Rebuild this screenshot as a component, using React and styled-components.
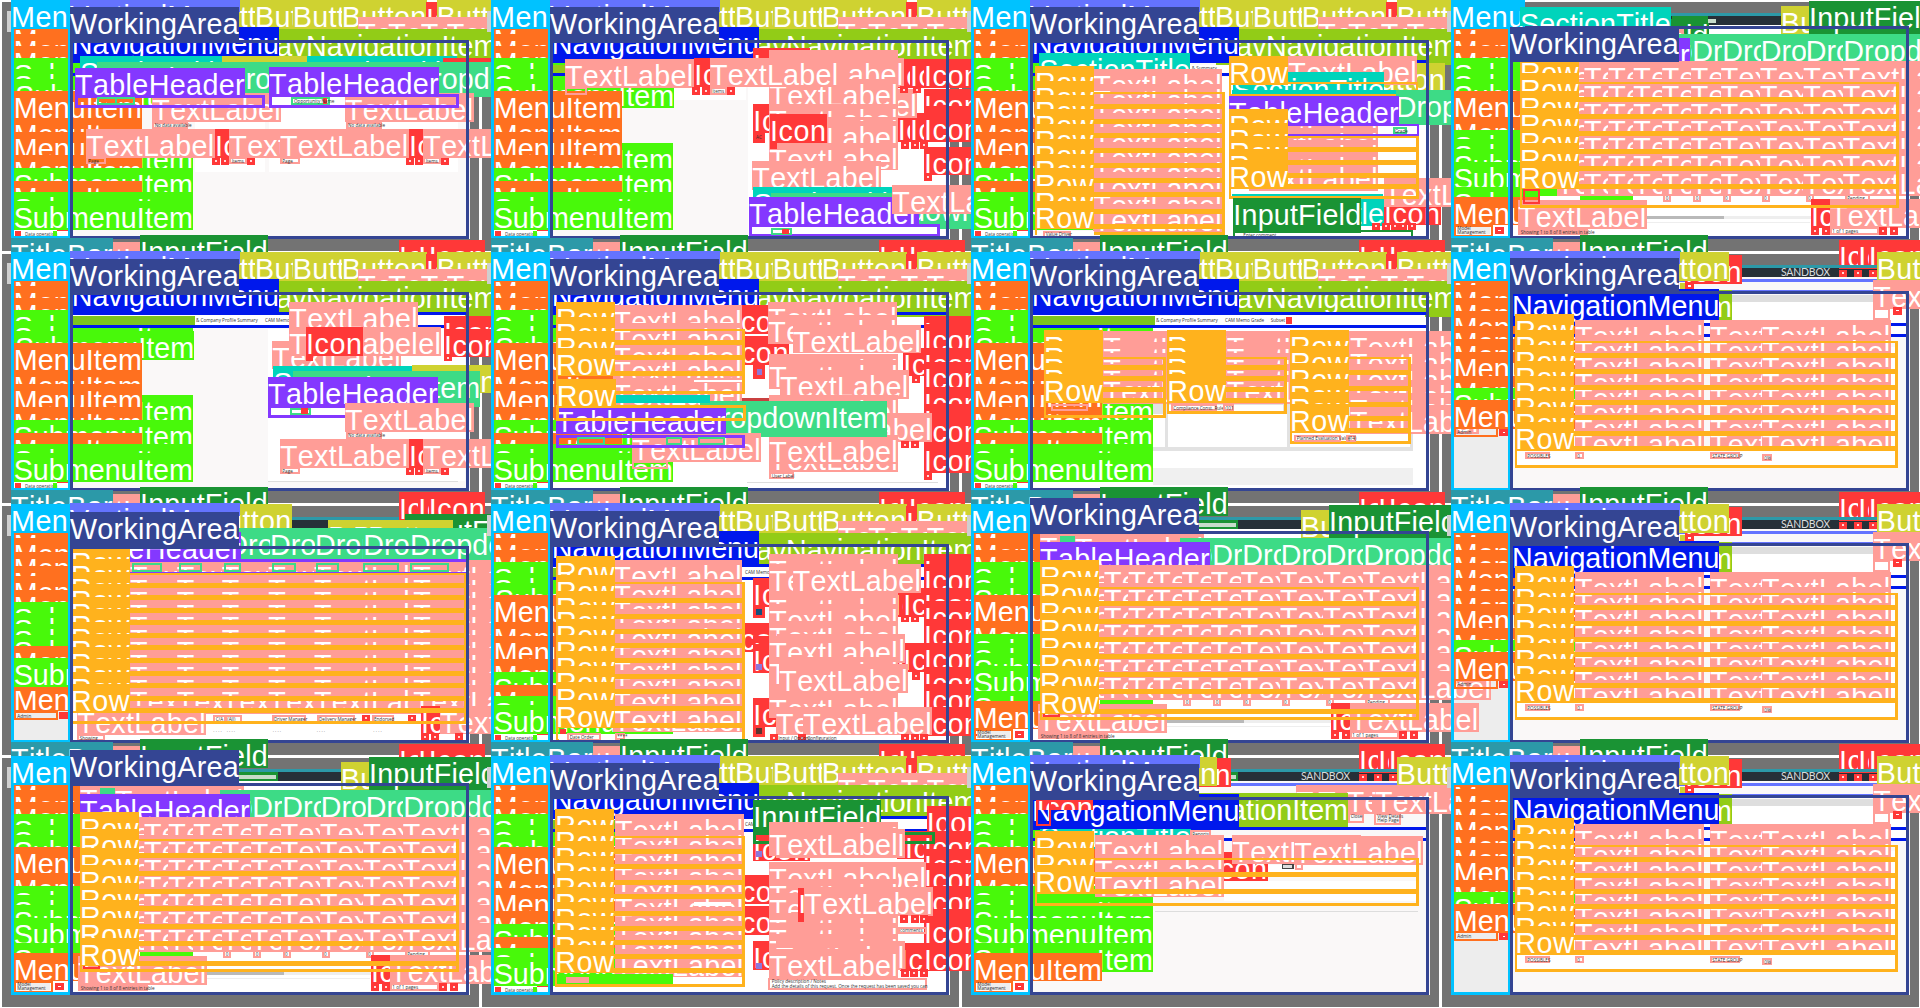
import React from "react";
import styled, { createGlobalStyle } from "styled-components";

const Global = createGlobalStyle`
  body { margin: 0; background: #fff; font-family: "Liberation Sans", Arial, sans-serif; }
`;

/* Class palette: [name, colour, label width, label has a descender] */
const KINDS = {
  I: ["Icon", "#ff3838", 56.7],
  T: ["TextLabel", "#ff9d97", 128.5],
  M: ["MenuItem", "#ff701f", 128.3],
  R: ["Row", "#ffb21d", 59],
  B: ["Button", "#cfd231", 85],
  S: ["SubmenuItem", "#48f90a", 179.3],
  N: ["NavigationItem", "#92cc17", 191.4, true],
  D: ["DropdownItem", "#3ddb86", 187, true],
  F: ["InputField", "#1a9334", 128, true],
  H: ["SectionTitle", "#00d4bb", 150.7],
  L: ["TitleBar", "#2c99a8", 102],
  C: ["Menu", "#00c2ff", 73.7],
  W: ["WorkingArea", "#344593", 169, true],
  V: ["VerticalMenu", "#6473ff", 170],
  G: ["NavigationMenu", "#0018ec", 207.4, true],
  A: ["TableHeader", "#8438ff", 170],
};

const EM = {
  Icon: 1.89, TextLabel: 4.391, MenuItem: 4.446, Row: 2.0, Button: 2.891, SubmenuItem: 6.225,
  NavigationItem: 6.669, DropdownItem: 6.502, InputField: 4.391, SectionTitle: 5.224,
  TitleBar: 3.445, Menu: 2.501, WorkingArea: 5.779, VerticalMenu: 5.835,
  NavigationMenu: 7.225, TableHeader: 5.78,
};

const Page = styled.main`
  width: 1920px;
  height: 1008px;
  overflow: hidden;
  position: relative;
  display: grid;
  grid-template-columns: repeat(4, 480px);
  grid-template-rows: repeat(4, 252px);
`;
const Tile = styled.section`
  position: relative;
  box-sizing: border-box;
  padding: 2px 1px 1px 2px;
  display: flex;
`;
const Desktop = styled.div`
  flex: 1;
  display: flex;
  padding: 13px 9px 12px 10px;
  background: #737373;
`;
const Screen = styled.div`
  flex: 1;
  display: flex;
  flex-direction: column;
  background: #fff;
`;
const TopBar = styled.div`
  height: 10px;
  display: flex;
  align-items: center;
  background: #263038;
`;
const Brand = styled.span`
  margin-left: 329px;
  font: 10.5px/10px Lato, "Open Sans", sans-serif;
  letter-spacing: -0.2px;
  color: #d9dcde;
`;
const Body = styled.div`
  flex: 1;
  display: flex;
`;
const Side = styled.div`
  width: 60px;
  background: ${(p) => (p.$grey ? "#ededed" : "#fff")};
`;
const Work = styled.div`
  flex: 1;
  background: ${(p) => (p.$white ? "#fff" : "#faf8f8")};
`;
const place = ({ $x, $y }) => `left: ${$x / 3}px; top: ${$y / 3}px;`;
const Label = styled.div`
  position: absolute;
  z-index: 1;
  ${place}
  width: ${(p) => p.$w}px;
  height: ${(p) => p.$h}px;
  overflow: hidden;
  background: ${(p) => p.$c};
  color: #fff;
  font-size: 28.7px;
  line-height: 34px;
  font-kerning: none;
  letter-spacing: ${(p) => p.$ls}px;
  white-space: nowrap;
`;
const Outline = styled.div`
  position: absolute;
  z-index: 1;
  ${place}
  box-sizing: border-box;
  width: ${(p) => p.$w / 3}px;
  height: ${(p) => p.$h / 3}px;
  border-style: solid;
  border-color: ${(p) => p.$c};
  border-width: ${(p) => p.$b};
`;
const Patch = styled.div`
  position: absolute;
  z-index: 1;
  ${place}
  width: ${(p) => p.$w / 3}px;
  height: ${(p) => p.$h / 3}px;
  background: ${(p) => p.$c};
`;
const Tiny = styled.span`
  position: absolute;
  z-index: 1;
  ${place}
  font: 4.6px/6px "Open Sans", sans-serif;
  color: #333;
  white-space: nowrap;
`;

/* Coordinates are in thirds of a pixel, relative to the tile. */
const lab = (k, x, ...ys) => ys.map((y) => ({ t: "label", k, x, y }));
const cut = (k, x, y, h) => [{ t: "label", k, x, y, h }];
const across = (k, y, ...xs) => xs.map((x) => ({ t: "label", k, x, y }));
const box = (k, x, y, w, h, b = "2px") => [{ t: "box", k, x, y, w, h, b }];
const fill = (c, x, y, w, h) => [{ t: "fill", c, x, y, w, h }];
const tiny = (s, x, y) => [{ t: "tiny", s, x, y }];
const rows = (x, right, ys, end, off = 80) => [
  ...ys.flatMap((y, i) => {
    const bottom = i < ys.length - 1 ? ys[i + 1] + off : end;
    return box("R", x, y + off, right - x, bottom - y - off, "2px 3px 3px 2px");
  }),
  ...lab("R", x, ...ys),
];
const texts = (xs, ys) => ys.flatMap((y) => across("T", y, ...xs));
const chip = (x, y, w, s = "", h = 22) => [...box("T", x, y, w, h, "2px"), ...tiny(s, x + 7, y + 2)];
const icons = (y, ...xs) =>
  xs.flatMap((x) => [...fill("#ff3838", x, y, 24, 22), ...fill("#ffd9d9", x + 9, y + 8, 6, 6)]);

const sideA = [
  ...lab("M", 41, 70, 103, 138),
  ...lab("S", 41, 174, 208),
  ...lab("S", 45, 238),
  ...lab("S", 41, 430),
  ...lab("M", 41, 273, 355, 395, 465),
  ...lab("S", 41, 503),
  ...lab("M", 41, 543),
  ...lab("S", 41, 575, 604),
  ...fill("#ff3838", 45, 692, 18, 16),
  ...tiny("Data operation", 75, 692),
  ...fill("#48f90a", 160, 692, 12, 16),
  ...fill("#ff3838", 172, 690, 31, 4),
];
const sideBTop = [
  ...lab("M", 41, 70, 103, 138),
  ...lab("S", 41, 174, 208, 238),
  ...lab("M", 41, 273, 350),
];
const sideB = [
  ...sideBTop,
  ...lab("S", 41, 390, 418, 448, 485, 562),
  ...lab("M", 41, 590),
  ...box("M", 41, 674, 118, 36),
  ...fill("#eee", 50, 680, 100, 22),
  ...tiny("Model", 52, 674),
  ...tiny("Management", 52, 686),
  ...fill("#ff3838", 165, 680, 27, 22),
  ...fill("#fff", 175, 689, 8, 4),
];
const sideC = [
  ...lab("M", 41, 72, 98, 138, 178, 222, 262, 300, 372),
  ...lab("S", 41, 408),
  ...lab("M", 41, 444),
  ...box("M", 41, 526, 134, 29),
  ...tiny("Admin", 52, 532),
  ...fill("#ff3838", 178, 530, 26, 22),
  ...fill("#fff", 188, 539, 8, 4),
];

const title = (first) =>
  first
    ? []
    : [
        ...across("I", -36, 1197, 1255, 1286),
        ...lab("T", 200, -30),
        ...lab("L", 33, -42),
        ...cut("F", 420, -51, 88),
      ];
const titleIcons = icons(53, 1197, 1242, 1286);
const frame = (y, top, vertical) => [
  ...(vertical ? cut("V", 210, -2, 38) : []),
  ...box("C", 33, 4, 178, 713, "3px 2px 3px 3px"),
  ...box("W", 210, top, 1197, 717 - top, "3px"),
  ...lab("C", 33, 1),
  ...(vertical ? cut("V", 210, -2, 34) : []),
  ...lab("W", 210, y),
];
const navBox = (y, h) => box("G", 210, y, 1197, h, "3px");
const topA = [
  ...across("N", 84, 767, 918),
  ...across("B", 1, 612, 765, 878, 1025),
  ...lab("I", 1278, 6),
  ...lab("B", 1310, 1),
  ...texts([1075, 1165, 1262, 1340], [50]),
  ...across("N", 88, 767, 918),
  ...lab("G", 215, 82),
  ...navBox(181, 48),
];
const navStrip = [
  ...fill("#fff", 220, 190, 1176, 29),
  ...fill("#7cc51f", 219, 193, 366, 25),
  ...tiny("& Company Profile Summary", 588, 196),
  ...tiny("CAM Memo Grade", 795, 196),
];

const footerPair = (x, y) => [
  ...lab("T", x, y),
  ...lab("I", x + 387, y),
  ...lab("T", x + 430, y),
  ...chip(x, y + 84, 60, "Page"),
  ...icons(y + 86, x + 378, x + 404),
  ...chip(x + 430, y + 84, 54, "Items"),
  ...icons(y + 86, x + 482),
];

const tile1 = [
  ...sideA, ...topA,
  ...lab("S", 45, 238).map((e) => ({ ...e, h: 4 })),
  ...fill("#fff", 585, 323, 210, 192), ...fill("#fff", 808, 323, 567, 192),
  ...lab("H", 240, 167), ...lab("B", 665, 167), ...lab("H", 920, 167), ...lab("I", 1330, 175),
  ...cut("D", 290, 186, 20), ...across("D", 186, 675, 1234),
  ...lab("T", 457, 280), ...lab("T", 1035, 280),
  ...fill("#ff701f", 320, 292, 25, 20), ...fill("#fff", 815, 290, 220, 26),
  ...box("A", 226, 284, 570, 40, "3px"), ...box("A", 808, 282, 569, 41, "3px"),
  ...box("D", 292, 290, 60, 24), ...box("D", 346, 290, 60, 24), ...box("D", 872, 290, 118, 25),
  ...fill("#ff3838", 968, 294, 14, 18), ...tiny("Opportunity Name", 882, 294),
  ...lab("A", 225, 204), ...lab("A", 807, 202),
  ...chip(457, 365, 108, "No data available"), ...chip(1037, 365, 108, "No data available"),
  ...footerPair(258, 387), ...footerPair(840, 387),
  ...frame(21, 120, true),
];

const tile2 = [
  ...sideA, ...topA,
  ...fill("#fff", 582, 262, 215, 38), ...fill("#fff", 805, 230, 590, 478), ...fill("#92cc17", 219, 195, 36, 24),
  ...lab("I", 820, 144), ...lab("I", 1253, 178), ...lab("I", 1290, 178), ...lab("I", 1332, 178, 266, 318),
  ...across("I", 340, 1253, 1290, 1332), ...lab("I", 1332, 440),
  ...lab("I", 820, 312), ...fill("#ff3838", 820, 398, 35, 30), ...tiny("AC", 828, 402),
  ...lab("T", 925, 268), ...lab("T", 868, 268, 345, 395, 425),
  ...fill("#ff9d97", 868, 151, 385, 88), ...lab("T", 885, 175),
  ...lab("T", 868, 238), ...cut("T", 868, 311, 40), ...lab("T", 868, 362), ...cut("T", 868, 430, 60),
  ...lab("I", 870, 343), ...fill("#ff3838", 870, 425, 20, 21),
  ...lab("T", 255, 178), ...lab("I", 643, 175), ...lab("T", 690, 175),
  ...chip(255, 262, 65), ...icons(262, 635, 665), ...chip(690, 262, 50, "Items"), ...icons(262, 740),
  ...icons(425, 1263, 1293, 1320), ...icons(258, 1260, 1300), ...icons(520, 1333),
  ...lab("T", 817, 483), ...lab("H", 820, 561), ...lab("D", 1100, 582), ...fill("#3ddb86", 872, 579, 365, 12),
  ...fill("#fff", 812, 680, 560, 22), ...box("A", 808, 672, 572, 40, "3px"), ...lab("A", 807, 590),
  ...box("D", 873, 684, 62, 22), ...fill("#ff3838", 905, 686, 22, 16), ...lab("T", 1237, 555),
  ...frame(21, 120, true),
];

const r3 = [197, 242, 285, 328, 372, 417, 462, 505, 557, 602];
const tile3 = [
  ...sideA, ...topA,
  ...fill("#fff", 690, 195, 118, 23), ...fill("#fff", 785, 230, 612, 478), ...tiny("& Summary", 695, 196),
  ...cut("H", 238, 158, 105),
  ...texts([400], r3.map((y) => y + 10)),
  ...rows(225, 795, r3, 704),
  ...fill("#fff", 232, 692, 170, 16), ...chip(250, 692, 84, "Value Driver"),
  ...lab("B", 1200, 190), ...lab("T", 985, 168), ...cut("H", 820, 218, 60),
  ...fill("#00d4bb", 985, 215, 287, 20), ...cut("H", 820, 218, 60), ...fill("#00d4bb", 817, 270, 556, 14),
  ...box("R", 808, 245, 566, 43), ...lab("R", 808, 168),
  ...lab("D", 1307, 270),
  ...texts([868], [358, 385, 419, 455, 487]),
  ...fill("#fff", 1257, 373, 115, 225),
  ...box("A", 808, 371, 569, 38), ...lab("A", 807, 287),
  ...box("D", 1298, 380, 42, 22), ...tiny("Grade", 1304, 383),
  ...lab("I", 1255, 590), ...lab("H", 820, 591), ...lab("I", 1272, 590), ...lab("T", 1272, 535),
  ...rows(808, 1377, [327, 369, 408, 447, 479], 598, 81),
  ...fill("#00d4bb", 815, 582, 455, 5),
  ...icons(668, 1237, 1265, 1293, 1318, 1343),
  ...fill("#fff", 826, 696, 530, 12), ...box("F", 820, 690, 540, 24), ...lab("F", 820, 593),
  ...tiny("Enter comment", 850, 697),
  ...frame(21, 120, true),
];

const gridTable = (ys, end) => {
  const n = ys.length;
  return [
    ...lab("T", 240, 80), ...lab("T", 345, 85), ...fill("#3ddb86", 300, 97, 45, 18),
    ...across("D", 101, 660, 757, 847, 962, 1097, 1210),
    ...lab("A", 240, 114),
    ...fill("#ff9d97", 420, 182, 987, 60),
    ...texts([350, 432, 505, 580, 665, 752, 842, 960, 1090, 1208], [182, 238, 291, 343, 394, 448, 502]),
    ...fill("#fff", 300, 588, 1070, 22), ...fill("#48f90a", 420, 588, 160, 12),
    ...[670, 760, 848, 965, 1097].flatMap((x) => chip(x, 583, 24, "0")),
    ...chip(1215, 583, 75, "Pending"),
    ...fill("#b9b9b9", 621, 647, 231, 10), ...fill("#eee", 852, 647, 260, 10), ...fill("#eee", 621, 667, 490, 3),
    ...lab("T", 234, 600), ...lab("I", 1113, 598), ...lab("T", 1170, 598),
    ...rows(240, 1377, ys, end, n > 7 ? 80 : 79),
    ...box("I", 248, n > 7 ? 612 : 568, 52, n > 7 ? 28 : 44),
    ...(n > 7 ? lab("R", 240, ys[n - 1]) : []),
    ...fill("#ff9d97", 234, 686, 210, 19), ...tiny("Showing 1 to 8 of 8 entries in table", 242, 686),
    ...icons(682, 1113, 1145), ...chip(1170, 682, 148, "1 of 1 pages"), ...icons(682, 1318, 1350),
  ];
};
const headB = [
  ...fill("#1a9334", 717, 48, 118, 27), ...fill("#c7dccb", 717, 57, 111, 13),
  ...fill("#2c99a8", 700, 40, 410, 8),
  ...lab("B", 1022, 18), ...lab("F", 1107, 4),
];
const tile4 = [
  ...fill("#1a9334", 697, 48, 107, 55), ...cut("F", 422, 57, 46), ...fill("#c7dccb", 804, 57, 25, 13),
  ...fill("#2c99a8", 692, 40, 418, 8), ...lab("B", 1022, 18), ...lab("F", 1107, 4),
  ...sideB,
  ...gridTable([168, 220, 272, 323, 377, 428, 482], 624),
  ...frame(80, 78, false),
  ...cut("H", 240, 21, 57),
];
const tile11 = [
  ...headB, ...sideB, ...gridTable([168, 220, 275, 327, 380, 433, 485, 545], 649),
  ...frame(-18, 80, false),
];

const tile5 = [
  ...sideA, ...topA, ...navStrip,
  ...fill("#fff", 805, 230, 590, 458), ...fill("#ddd", 805, 686, 570, 3),
  ...lab("I", 1332, 192, 230), ...lab("T", 868, 151), ...lab("T", 817, 266),
  ...lab("T", 938, 225), ...lab("T", 868, 225), ...lab("I", 918, 225), ...fill("#ff3838", 918, 309, 20, 18),
  ...icons(306, 1333),
  ...lab("H", 820, 343), ...lab("B", 1235, 338), ...lab("D", 880, 358),
  ...fill("#fff", 812, 466, 225, 24), ...box("A", 805, 460, 572, 38, "3px"), ...box("D", 870, 467, 63, 22), ...fill("#ff3838", 902, 468, 22, 19),
  ...fill("#fff", 1035, 490, 360, 70),
  ...lab("A", 804, 375), ...lab("T", 1035, 453), ...chip(1037, 539, 110, "No data available"),
  ...footerPair(840, 561),
  ...frame(21, 120, true),
];

const r6 = [150, 194, 238, 287];
const tile6 = [
  ...sideA, ...topA,
  ...fill("#fff", 582, 230, 815, 478),
  ...lab("I", 757, 160, 252),
  ...texts([400], [160, 212, 267, 308, 378]),
  ...fill("#fff", 642, 384, 143, 6),
  ...fill("#ff3838", 820, 338, 35, 42), ...fill("#8d78d8", 830, 352, 16, 18),
  ...fill("#c94040", 787, 437, 80, 9),
  ...lab("I", 1332, 192, 217), ...lab("I", 1270, 287), ...lab("I", 1332, 287, 330, 405, 455, 490, 577),
  ...lab("T", 865, 151, 190), ...lab("T", 938, 218), ...lab("T", 868, 305, 325), ...lab("T", 900, 354),
  ...lab("T", 868, 430), ...lab("T", 970, 483),
  ...lab("T", 868, 574, 550), ...chip(868, 660, 73, "User Label"),
  ...icons(372, 1295), ...icons(567, 1263, 1292), ...icons(661, 1333),
  ...lab("D", 660, 448), ...lab("T", 457, 543), ...chip(457, 628, 108, ""),
  ...fill("#00d4bb", 408, 430, 282, 23),
  ...box("A", 228, 548, 567, 40, "3px"), ...lab("A", 228, 460),
  ...box("D", 292, 554, 82, 25), ...box("D", 557, 554, 48, 25), ...box("D", 654, 554, 82, 25),
  ...rows(228, 795, r6, 425), ...box("R", 228, 460, 569, 46, "3px"), ...cut("R", 230, 380, 82),
  ...fill("#ddd", 800, 690, 575, 2),
  ...frame(21, 120, true),
];

const t7 = [235, 268, 300, 334, 367];
const t7b = [235, 283, 332, 380, 420, 457];
const tile7 = [
  ...fill("#fff", 585, 228, 815, 480), ...fill("#e2e2e2", 580, 445, 780, 152), ...fill("#fff", 580, 597, 780, 50),
  ...fill("#fff", 580, 485, 34, 100), ...fill("#fff", 624, 485, 357, 100), ...fill("#fff", 991, 540, 358, 45),
  ...fill("#f0f0f0", 580, 648, 780, 50),
  ...sideA, ...topA, ...navStrip,
  ...tiny("Subset", 932, 196), ...fill("#ff3838", 978, 194, 19, 22),
  ...texts([430], t7.map((y) => y + 2)), ...rows(252, 617, t7, 497),
  ...texts([800], t7.map((y) => y + 2)), ...rows(622, 980, t7, 486),
  ...texts([1170], t7b.map((y) => y + 3)), ...rows(990, 1352, t7b, 577),
  ...chip(272, 456, 112, ""), ...fill("#fff", 628, 458, 342, 20), ...chip(633, 456, 138, "Compliance Const. Rules"), ...chip(790, 456, 32, "101"),
  ...fill("#fff", 998, 550, 346, 18), ...chip(1003, 548, 140, "Planned Evaluation Value"), ...chip(1158, 548, 30, "(14)"),
  ...frame(21, 120, true),
];

const r8 = [187, 233, 280, 327, 372, 418, 465, 510];
const tile8 = [
  ...titleIcons,
  ...sideC,
  ...box("V", 210, 82, 1197, 40, "3px"),
  ...lab("I", 736, 10), ...lab("B", 612, 1), ...fill("#2c99a8", 906, 40, 404, 8), ...lab("B", 1310, 1),
  ...fill("#ff3838", 735, 90, 28, 22), ...fill("#fff", 743, 99, 10, 5), ...fill("#cfd231", 720, 92, 14, 18),
  ...fill("#fff", 875, 150, 525, 95), ...fill("#dedede", 875, 128, 525, 22),
  ...lab("T", 1300, 85), ...box("T", 1300, 167, 50, 36), ...fill("#ff3838", 1358, 165, 28, 23), ...fill("#fff", 1368, 174, 10, 4),
  ...cut("N", 302, 115, 98), ...navBox(213, 42), ...lab("G", 216, 112),
  ...texts([405, 810, 966], r8.map((y) => y + 17)),
  ...fill("#fff", 792, 204, 18, 9), ...fill("#fff", 232, 597, 1135, 45), ...fill("#fff", 1353, 285, 13, 315),
  ...rows(226, 1374, r8, 648),
  ...chip(255, 600, 75, "POSSIBLES"), ...chip(405, 600, 27, "0"), ...chip(810, 600, 90, "STATE GROUP"), ...chip(966, 606, 30, "0%"),
  ...frame(18, 117, true),
];

const r9 = [127, 165, 203, 240, 278, 316, 353, 391, 429, 466, 504, 541];
const tile9 = [
  ...lab("M", 41, 72, 103, 143, 185, 215, 258), ...lab("S", 41, 294, 327, 360, 392),
  ...lab("M", 41, 426, 536), ...lab("S", 41, 462), ...box("M", 41, 620, 134, 29), ...fill("#ff3838", 178, 623, 26, 22), ...tiny("Admin", 52, 626),
  ...fill("#ff701f", 41, 552, 132, 10), ...fill("#2c99a8", 876, 40, 320, 8),
  ...lab("B", 620, 1), ...fill("#1a9334", 1215, 30, 225, 17), ...cut("F", 1222, 30, 106),
  ...across("B", 47, 985, 1060, 1105),
  ...across("D", 72, 682, 810, 945, 1090, 1230), ...lab("A", 213, 84),
  ...fill("#ff9d97", 390, 178, 1080, 450),
  ...texts([390, 530, 665, 805, 942, 1240], r9.slice(1, 12).map((y) => y + 3)),
  ...fill("#8438ff", 218, 165, 1182, 10), ...fill("#8438ff", 218, 203, 1182, 7),
  ...[[395, 92], [537, 68], [673, 50], [815, 72], [947, 70], [1090, 108], [1230, 118]].flatMap(([x, w]) => box("D", x, 177, w, 26)),
  ...fill("#fff", 600, 632, 800, 76),
  ...[[640, "C/A"], [675, "(All)"], [815, "Driver Manager"], [950, "Delivery Manager"], [1115, "Endorsed"]].flatMap(([x, s]) => chip(x, 634, 20 + s.length * 6, s)),
  ...icons(632, 1087, 1225),
  ...[640, 680, 818, 950, 1120].flatMap((x) => tiny("· · · ·", x, 672)),
  ...lab("T", 232, 607), ...lab("I", 1263, 605), ...lab("T", 1320, 605),
  ...chip(232, 690, 83, "Showing"), ...icons(688, 1263, 1293, 1365),
  ...rows(213, 1402, r9, 660),
  ...frame(24, 125, true),
];

const r10 = [155, 212, 260, 303, 345, 392, 440, 485, 535, 587];
const tile10 = [
  ...sideA, ...topA, ...navStrip,
  ...fill("#fff", 582, 230, 815, 478),
  ...lab("I", 757, 357),
  ...texts([400], r10.map((y) => y + 12)),
  ...lab("I", 820, 222), ...fill("#ff3838", 820, 308, 35, 33), ...fill("#14507c", 829, 314, 18, 18),
  ...lab("I", 820, 395, 420), ...fill("#8d78d8", 829, 480, 16, 18),
  ...lab("I", 820, 582), ...fill("#ff3838", 820, 664, 35, 34), ...fill("#5c3430", 829, 672, 16, 18),
  ...lab("I", 1332, 150, 180), ...across("I", 252, 1240, 1270, 1332), ...lab("I", 1332, 290, 345), ...across("I", 418, 1250, 1270, 1332),
  ...lab("I", 1332, 490, 540, 610),
  ...lab("T", 938, 180), ...lab("T", 868, 151), ...cut("T", 868, 180, 86), ...lab("T", 938, 180),
  ...lab("T", 868, 266, 300, 350), ...lab("T", 890, 390), ...lab("T", 868, 395, 460), ...lab("T", 868, 540, 555),
  ...lab("T", 898, 480), ...cut("T", 868, 566, 50), ...lab("T", 888, 608), ...lab("T", 970, 608),
  ...icons(333, 1263, 1293), ...icons(505, 1295), ...icons(690, 870, 955, 1263, 1292, 1320),
  ...tiny("Input / Options", 895, 692), ...tiny("Configuration", 982, 692),
  ...rows(228, 795, r10, 714),
  ...fill("#fff", 238, 690, 545, 18), ...fill("#ff3838", 240, 675, 18, 16), ...chip(262, 688, 100, "Date Order"), ...chip(405, 686, 30, "****"),
  ...frame(21, 120, true),
];

const r14 = [160, 207, 254, 300, 344, 393, 438, 480, 522, 566];
const tile14 = [
  ...sideA, ...topA, ...navStrip,
  ...fill("#fff", 582, 230, 815, 478),
  ...lab("I", 757, 358, 450),
  ...texts([405], r14.map((y) => y + 14)),
  ...fill("#fff", 642, 437, 110, 14),
  ...lab("I", 820, 230), ...fill("#8d78d8", 829, 286, 16, 18),
  ...lab("I", 820, 555), ...fill("#8d78d8", 829, 622, 16, 18),
  ...lab("I", 1340, 150), ...across("I", 224, 1250, 1275, 1332), ...lab("I", 1332, 280, 320, 390, 460, 480), ...across("I", 560, 1260, 1332),
  ...box("F", 820, 228, 546, 35, "3px"), ...cut("F", 820, 132, 105),
  ...lab("T", 888, 220), ...lab("T", 868, 198, 215), ...lab("T", 953, 318), ...lab("T", 868, 318, 370, 410, 470), ...lab("T", 868, 500, 535), ...lab("T", 888, 555),
  ...lab("T", 868, 580), ...lab("I", 955, 395), ...fill("#ff3838", 955, 470, 16, 28), ...lab("T", 973, 394),
  ...icons(478, 1260, 1292, 1320), ...chip(1253, 512, 87, "comments"), ...icons(640, 1263, 1290, 1320),
  ...fill("#fff", 868, 667, 472, 32), ...box("T", 865, 665, 475, 36),
  ...tiny("Policy description / Notes", 875, 666), ...tiny("Add the details of this request. Once the request has been saved you can", 875, 681),
  ...rows(226, 795, r14, 693),
  ...fill("#fff", 580, 662, 205, 22), ...fill("#48f90a", 232, 655, 347, 29), ...fill("#ff9d97", 258, 662, 70, 18),
  ...frame(21, 120, true),
];

const r15 = [226, 276, 327];
const tile15 = [
  ...titleIcons, ...fill("#1a9334", 804, 48, 30, 27), ...fill("#c7dccb", 813, 57, 15, 13), ...fill("#2c99a8", 813, 40, 500, 8),
  ...sideB,
  ...box("V", 210, 82, 1197, 44, "3px"),
  ...lab("I", 643, 6), ...lab("B", 515, 3), ...lab("B", 1310, 3),
  ...texts([1008, 1075, 1160, 1235, 1290], [88]), ...fill("#cfd231", 1310, 90, 70, 20),
  ...texts([1245], [88]),
  ...chip(1165, 170, 46, "Close", 32), ...box("T", 1243, 170, 80, 36), ...tiny("View Details", 1252, 172), ...tiny("Help Page", 1252, 184),
  ...lab("N", 590, 110), ...navBox(213, 42), ...lab("H", 240, 192),
  ...chip(690, 222, 62, "Reports"),
  ...lab("G", 216, 113), ...cut("I", 230, 105, 58), ...box("I", 228, 130, 44, 81),
  ...lab("I", 753, 288), ...texts([405], [238, 293, 338]), ...lab("T", 817, 238), ...lab("T", 1003, 240),
  ...fill("#fff", 923, 326, 445, 22), ...fill("#fff", 792, 375, 576, 60), ...fill("#444", 965, 324, 36, 16), ...fill("#ddd", 970, 328, 26, 9), ...chip(1004, 320, 25),
  ...rows(226, 1377, r15, 449), ...fill("#ddd", 585, 465, 790, 2),
  ...frame(24, 122, true),
];

const TILES = [
  { items: tile1 }, { items: tile2 }, { items: tile3 }, { items: tile4, white: true },
  { items: tile5 }, { items: tile6, white: true }, { items: tile7, white: true }, { items: tile8, grey: true, brand: true },
  { items: tile9, grey: true, white: true }, { items: tile10, white: true }, { items: tile11, white: true }, { items: tile8, grey: true, brand: true },
  { items: tile11, white: true }, { items: tile14, white: true }, { items: tile15, brand: true }, { items: tile8, grey: true, brand: true },
];

function Mark({ e }) {
  if (e.t === "fill") return <Patch $x={e.x} $y={e.y} $w={e.w} $h={e.h} $c={e.c} />;
  if (e.t === "tiny") return <Tiny $x={e.x} $y={e.y}>{e.s}</Tiny>;
  const [name, color, width, tall] = KINDS[e.k];
  if (e.t === "box") return <Outline $x={e.x} $y={e.y} $w={e.w} $h={e.h} $b={e.b} $c={color} />;
  const height = e.h ? e.h / 3 : tall ? 35.4 : 28.7;
  const spacing = (width - EM[name] * 28.7) / name.length;
  return (
    <Label $x={e.x} $y={e.y} $w={width} $h={height} $c={color} $ls={spacing}>
      {name}
    </Label>
  );
}

export default function App() {
  return (
    <>
      <Global />
      <Page>
        {TILES.map((tile, i) => (
          <Tile key={i}>
            <Desktop>
              <Screen>
                <TopBar>{tile.brand && <Brand>SANDBOX</Brand>}</TopBar>
                <Body>
                  <Side $grey={tile.grey} />
                  <Work $white={tile.white} />
                </Body>
              </Screen>
            </Desktop>
            {fill("#cfcfcf", 22, 33, 11, 62).concat(title(i < 4), tile.items).map((e, n) => (
              <Mark key={n} e={e} />
            ))}
          </Tile>
        ))}
      </Page>
    </>
  );
}
